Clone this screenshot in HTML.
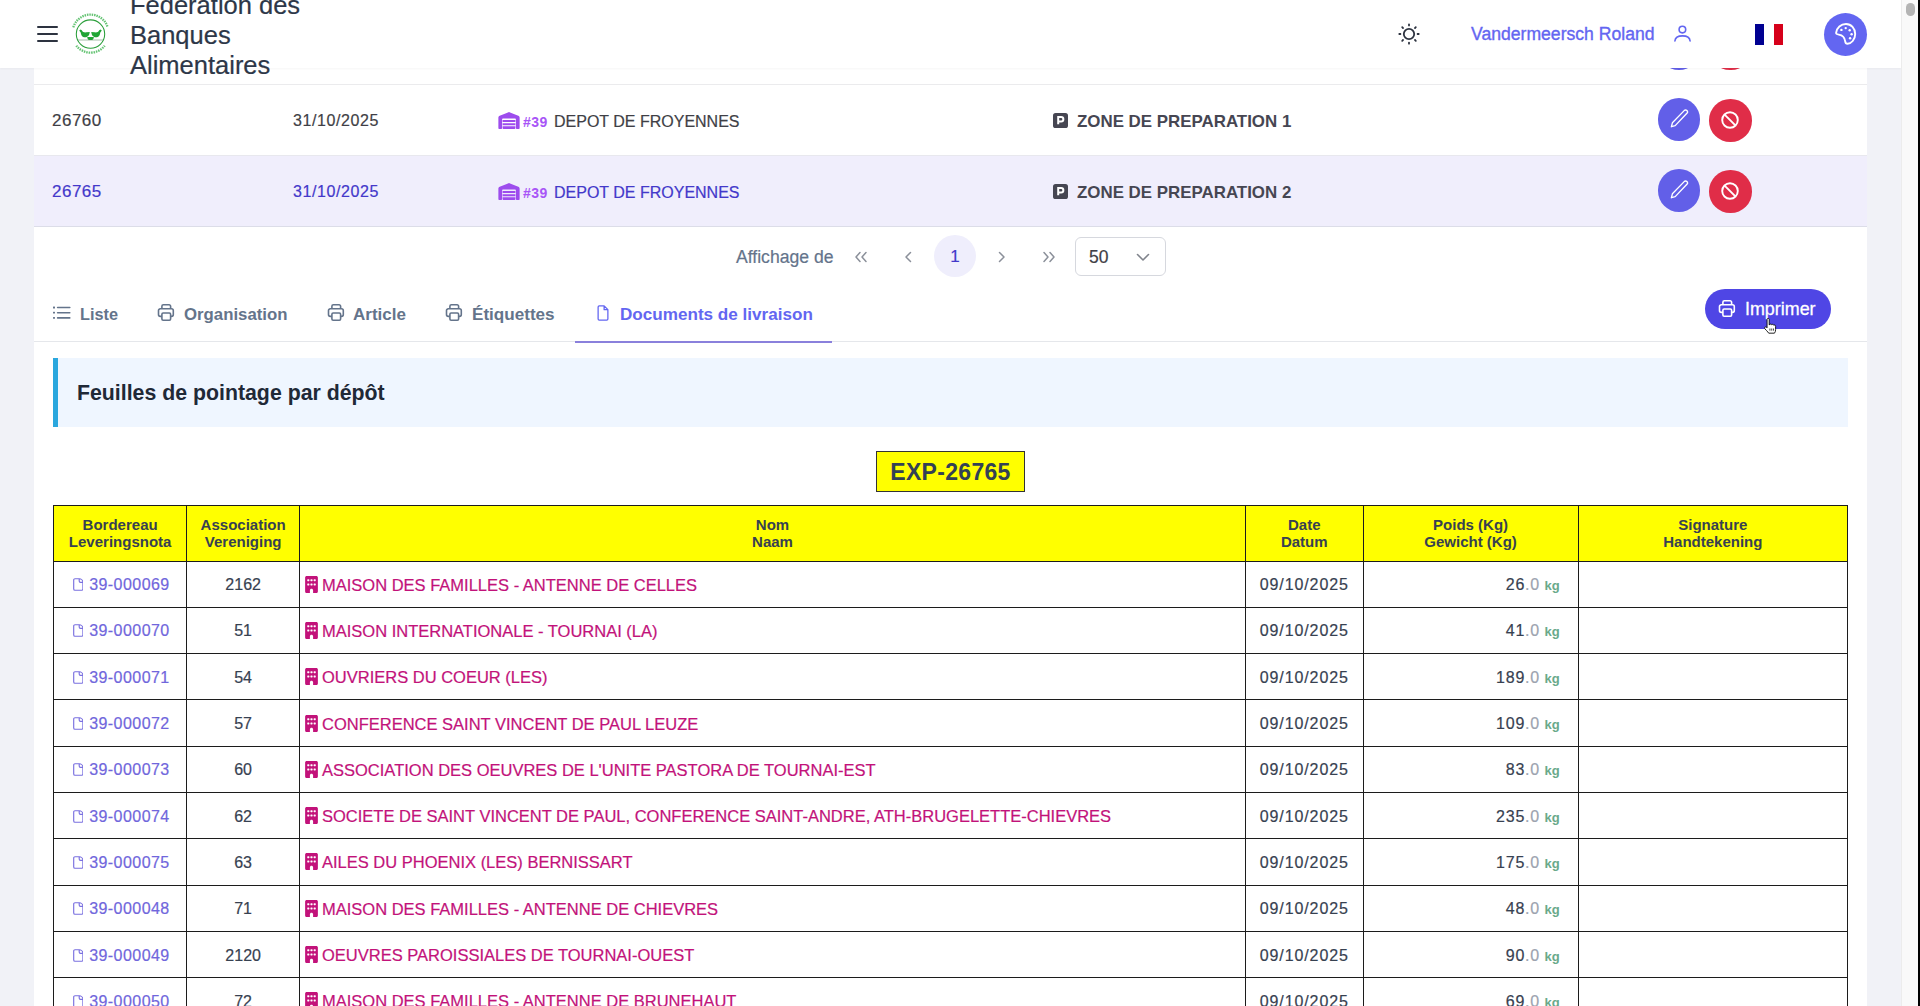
<!DOCTYPE html>
<html><head><meta charset="utf-8">
<style>
*{box-sizing:border-box;margin:0;padding:0}
html,body{width:1920px;height:1006px;overflow:hidden}
body{background:#f1f2f7;font-family:"Liberation Sans",sans-serif;position:relative;color:#334155}
.abs{position:absolute}
#card{position:absolute;left:34px;top:0;width:1833px;height:1006px;background:#fff}
#hdr{position:absolute;left:0;top:0;width:1901px;height:68px;background:#fff;z-index:5;box-shadow:0 1px 2px rgba(0,0,0,0.04)}
#sb{position:absolute;left:1901px;top:0;width:17px;height:1006px;background:#f9f9f9;border-left:1px solid #ececec;z-index:6}
#sbthumb{position:absolute;left:1906px;top:3px;width:9px;height:13px;border-radius:5px;background:#b4b4b4;z-index:7}
#blk{position:absolute;left:1918px;top:0;width:2px;height:1006px;background:#000;z-index:7}
.t{position:absolute;white-space:nowrap;-webkit-text-stroke:0.2px currentColor}
.t[style*="bold"]{-webkit-text-stroke:0}
#tb td .kg{-webkit-text-stroke:0}
.rowline{position:absolute;left:34px;width:1833px;height:1px;background:#ebebed}
.btn{position:absolute;width:42.5px;height:42.5px;border-radius:50%}
.btn svg{position:absolute;left:11.25px;top:11.25px}
</style></head><body>
<div id="card"></div>

<!-- top rows -->
<div class="btn" style="left:1657.5px;top:27px;background:#625fe8"></div>
<div class="btn" style="left:1709px;top:27.5px;background:#e02d48"></div>
<div class="rowline" style="top:84px"></div>
<div class="abs" style="left:34px;top:155px;width:1833px;height:71px;background:#f0eefc"></div>
<div class="rowline" style="top:155px;background:#e8e8ee"></div>
<div class="rowline" style="top:226px;background:#dcdde8"></div>



<!-- row 1 -->
<div class="t" style="left:52px;top:111px;font-size:17px;line-height:20px;letter-spacing:0.5px;color:#3f3f46">26760</div>
<div class="t" style="left:293px;top:111px;font-size:16px;line-height:20px;letter-spacing:0.6px;color:#3f3f46">31/10/2025</div>
<svg class="abs" style="left:498px;top:112px" width="22" height="17" viewBox="0 0 640 512"><path fill="#9d4ced" d="M0 488V171.3c0-26.2 15.9-49.7 40.2-59.4L308.1 4.8c7.6-3.1 16.1-3.1 23.8 0l267.9 107.1c24.3 9.7 40.2 33.3 40.2 59.4V488c0 13.3-10.7 24-24 24H552c-13.3 0-24-10.7-24-24V224c0-17.7-14.3-32-32-32H144c-17.7 0-32 14.3-32 32V488c0 13.3-10.7 24-24 24H24c-13.3 0-24-10.7-24-24zm488 24H152c-13.3 0-24-10.7-24-24V432H512v56c0 13.3-10.7 24-24 24zM128 400V336H512v64H128zm0-96V240H512v64H128z"/></svg>
<div class="t" style="left:523px;top:113px;font-size:14px;line-height:18px;letter-spacing:0.5px;font-weight:bold;color:#a855f7">#39</div>
<div class="t" style="left:554px;top:111.5px;font-size:16px;line-height:20px;color:#3f3f46">DEPOT DE FROYENNES</div>
<svg class="abs" style="left:1053px;top:113px" width="15" height="15" viewBox="0 0 15 15"><rect width="15" height="15" rx="2.6" fill="#464652"/><path d="M5.2 11.3V4h2.9a2.25 2.25 0 0 1 0 4.5H5.2" fill="none" stroke="#fff" stroke-width="2"/></svg>
<div class="t" style="left:1077px;top:111.5px;font-size:16.9px;line-height:20px;font-weight:bold;color:#464652">ZONE DE PREPARATION 1</div>
<div class="btn" style="left:1657.5px;top:98px;background:#625fe8"><svg width="20" height="20" viewBox="0 0 20 20" fill="none" stroke="#fff" stroke-width="1.35" stroke-linejoin="round"><path d="M15.2 1.6a1.9 1.9 0 0 1 2.7 2.7L6.2 16.6 2.4 17.7l1-3.9z"/></svg></div>
<div class="btn" style="left:1709px;top:99px;background:#e02d48"><svg width="20" height="20" viewBox="0 0 20 20" fill="none" stroke="#fff" stroke-width="1.9"><circle cx="10" cy="10" r="7.8"/><path d="M4.6 4.6l10.8 10.8"/></svg></div>
<!-- row 2 -->
<div class="t" style="left:52px;top:182px;font-size:17px;line-height:20px;letter-spacing:0.5px;color:#4338ca">26765</div>
<div class="t" style="left:293px;top:182px;font-size:16px;line-height:20px;letter-spacing:0.6px;color:#4338ca">31/10/2025</div>
<svg class="abs" style="left:498px;top:183px" width="22" height="17" viewBox="0 0 640 512"><path fill="#9d4ced" d="M0 488V171.3c0-26.2 15.9-49.7 40.2-59.4L308.1 4.8c7.6-3.1 16.1-3.1 23.8 0l267.9 107.1c24.3 9.7 40.2 33.3 40.2 59.4V488c0 13.3-10.7 24-24 24H552c-13.3 0-24-10.7-24-24V224c0-17.7-14.3-32-32-32H144c-17.7 0-32 14.3-32 32V488c0 13.3-10.7 24-24 24H24c-13.3 0-24-10.7-24-24zm488 24H152c-13.3 0-24-10.7-24-24V432H512v56c0 13.3-10.7 24-24 24zM128 400V336H512v64H128zm0-96V240H512v64H128z"/></svg>
<div class="t" style="left:523px;top:184px;font-size:14px;line-height:18px;letter-spacing:0.5px;font-weight:bold;color:#a855f7">#39</div>
<div class="t" style="left:554px;top:182.5px;font-size:16px;line-height:20px;color:#4338ca">DEPOT DE FROYENNES</div>
<svg class="abs" style="left:1053px;top:184px" width="15" height="15" viewBox="0 0 15 15"><rect width="15" height="15" rx="2.6" fill="#464652"/><path d="M5.2 11.3V4h2.9a2.25 2.25 0 0 1 0 4.5H5.2" fill="none" stroke="#fff" stroke-width="2"/></svg>
<div class="t" style="left:1077px;top:182.5px;font-size:16.9px;line-height:20px;font-weight:bold;color:#464652">ZONE DE PREPARATION 2</div>
<div class="btn" style="left:1657.5px;top:169px;background:#625fe8"><svg width="20" height="20" viewBox="0 0 20 20" fill="none" stroke="#fff" stroke-width="1.35" stroke-linejoin="round"><path d="M15.2 1.6a1.9 1.9 0 0 1 2.7 2.7L6.2 16.6 2.4 17.7l1-3.9z"/></svg></div>
<div class="btn" style="left:1709px;top:170px;background:#e02d48"><svg width="20" height="20" viewBox="0 0 20 20" fill="none" stroke="#fff" stroke-width="1.9"><circle cx="10" cy="10" r="7.8"/><path d="M4.6 4.6l10.8 10.8"/></svg></div>

<!-- pagination -->
<div class="t" style="left:736px;top:247px;font-size:17.6px;line-height:20px;color:#64748b">Affichage de</div>
<svg class="abs" style="left:852px;top:249px" width="18" height="16" viewBox="0 0 18 16" fill="none" stroke="#8b909a" stroke-width="1.5" stroke-linecap="round" stroke-linejoin="round"><path d="M8 3.5 4 8l4 4.5M14 3.5 10 8l4 4.5"/></svg>
<svg class="abs" style="left:900px;top:249px" width="16" height="16" viewBox="0 0 16 16" fill="none" stroke="#8b909a" stroke-width="1.5" stroke-linecap="round" stroke-linejoin="round"><path d="M10.5 3.5 6 8l4.5 4.5"/></svg>
<div class="abs" style="left:934px;top:235px;width:42px;height:42px;border-radius:50%;background:#efeefc"></div>
<div class="t" style="left:934px;top:247px;width:42px;text-align:center;font-size:17px;line-height:20px;color:#4338ca">1</div>
<svg class="abs" style="left:994px;top:249px" width="16" height="16" viewBox="0 0 16 16" fill="none" stroke="#8b909a" stroke-width="1.5" stroke-linecap="round" stroke-linejoin="round"><path d="M5.5 3.5 10 8l-4.5 4.5"/></svg>
<svg class="abs" style="left:1040px;top:249px" width="18" height="16" viewBox="0 0 18 16" fill="none" stroke="#8b909a" stroke-width="1.5" stroke-linecap="round" stroke-linejoin="round"><path d="M4 3.5 8 8l-4 4.5M10 3.5 14 8l-4 4.5"/></svg>
<div class="abs" style="left:1075px;top:237px;width:91px;height:39px;border:1px solid #d6d8de;border-radius:6px;background:#fff"></div>
<div class="t" style="left:1089px;top:247px;font-size:17.5px;line-height:20px;color:#3f3f46">50</div>
<svg class="abs" style="left:1134px;top:248px" width="18" height="18" viewBox="0 0 18 18" fill="none" stroke="#80848c" stroke-width="1.6" stroke-linecap="round" stroke-linejoin="round"><path d="M3.5 6.5 9 12l5.5-5.5"/></svg>

<!-- tabs -->
<div class="abs" style="left:34px;top:341px;width:1833px;height:1px;background:#e5e7eb"></div>
<div class="abs" style="left:575px;top:341px;width:257px;height:2px;background:#8a80dc"></div>
<svg class="abs" style="left:52px;top:305px" width="20" height="16" viewBox="0 0 20 16" fill="#64748b"><rect x="1" y="1.6" width="2" height="1.8" rx=".5"/><rect x="1" y="6.8" width="2" height="1.8" rx=".5"/><rect x="1" y="12" width="2" height="1.8" rx=".5"/><rect x="4.8" y="1.7" width="13.8" height="1.6" rx=".8"/><rect x="4.8" y="6.9" width="13.8" height="1.6" rx=".8"/><rect x="4.8" y="12.1" width="13.8" height="1.6" rx=".8"/></svg>
<div class="t" style="left:80px;top:304px;font-size:16.3px;line-height:20px;font-weight:bold;color:#64748b">Liste</div>
<svg class="abs" style="left:157px;top:303px" width="18" height="19" viewBox="0 0 18 19" fill="none" stroke="#64748b" stroke-width="1.6" stroke-linejoin="round"><path d="M4.9 5.8V3.3a1.5 1.5 0 0 1 1.5-1.5h5.7a1.5 1.5 0 0 1 1.5 1.5v2.5M4.9 13.4H3.3a1.8 1.8 0 0 1-1.8-1.8V7.6a1.8 1.8 0 0 1 1.8-1.8h11.2a1.8 1.8 0 0 1 1.8 1.8v4a1.8 1.8 0 0 1-1.8 1.8H13.6"/><rect x="4.9" y="10" width="8.7" height="7.3" rx="1.2"/></svg>
<div class="t" style="left:184px;top:304.5px;font-size:16.8px;line-height:20px;font-weight:bold;color:#64748b">Organisation</div>
<svg class="abs" style="left:326.5px;top:303px" width="18" height="19" viewBox="0 0 18 19" fill="none" stroke="#64748b" stroke-width="1.6" stroke-linejoin="round"><path d="M4.9 5.8V3.3a1.5 1.5 0 0 1 1.5-1.5h5.7a1.5 1.5 0 0 1 1.5 1.5v2.5M4.9 13.4H3.3a1.8 1.8 0 0 1-1.8-1.8V7.6a1.8 1.8 0 0 1 1.8-1.8h11.2a1.8 1.8 0 0 1 1.8 1.8v4a1.8 1.8 0 0 1-1.8 1.8H13.6"/><rect x="4.9" y="10" width="8.7" height="7.3" rx="1.2"/></svg>
<div class="t" style="left:353px;top:304.5px;font-size:17px;line-height:20px;font-weight:bold;color:#64748b">Article</div>
<svg class="abs" style="left:445px;top:303px" width="18" height="19" viewBox="0 0 18 19" fill="none" stroke="#64748b" stroke-width="1.6" stroke-linejoin="round"><path d="M4.9 5.8V3.3a1.5 1.5 0 0 1 1.5-1.5h5.7a1.5 1.5 0 0 1 1.5 1.5v2.5M4.9 13.4H3.3a1.8 1.8 0 0 1-1.8-1.8V7.6a1.8 1.8 0 0 1 1.8-1.8h11.2a1.8 1.8 0 0 1 1.8 1.8v4a1.8 1.8 0 0 1-1.8 1.8H13.6"/><rect x="4.9" y="10" width="8.7" height="7.3" rx="1.2"/></svg>
<div class="t" style="left:472px;top:304.5px;font-size:17.1px;line-height:20px;font-weight:bold;color:#64748b">Étiquettes</div>
<svg class="abs" style="left:594px;top:304px" width="18" height="18" viewBox="0 0 24 24" fill="none" stroke="#6366f1" stroke-width="1.7" stroke-linejoin="round"><path d="M13.5 2.5H7A1.5 1.5 0 0 0 5.5 4v16A1.5 1.5 0 0 0 7 21.5h10a1.5 1.5 0 0 0 1.5-1.5V7.5l-5-5zM13.5 2.5v5h5"/></svg>
<div class="t" style="left:620px;top:304.5px;font-size:17.1px;line-height:20px;font-weight:bold;color:#6366f1">Documents de livraison</div>

<!-- imprimer -->
<div class="abs" style="left:1705px;top:289px;width:126px;height:40px;border-radius:20px;background:#4f46e5"></div>
<svg class="abs" style="left:1718px;top:299px" width="18" height="19" viewBox="0 0 18 19" fill="none" stroke="#fff" stroke-width="1.6" stroke-linejoin="round"><path d="M4.9 5.8V3.3a1.5 1.5 0 0 1 1.5-1.5h5.7a1.5 1.5 0 0 1 1.5 1.5v2.5M4.9 13.4H3.3a1.8 1.8 0 0 1-1.8-1.8V7.6a1.8 1.8 0 0 1 1.8-1.8h11.2a1.8 1.8 0 0 1 1.8 1.8v4a1.8 1.8 0 0 1-1.8 1.8H13.6"/><rect x="4.9" y="10" width="8.7" height="7.3" rx="1.2"/></svg>
<div class="t" style="left:1745px;top:299px;font-size:17.9px;line-height:20px;color:#fff;-webkit-text-stroke:0.3px #fff">Imprimer</div>
<svg class="abs" style="left:1762px;top:316.5px;z-index:4" width="17.3" height="18.7" viewBox="0 0 24 26"><path d="M7 3.5c0-1 .7-1.6 1.5-1.6S10 2.5 10 3.5V11l.5-.2c.3-1 1.2-1.3 2-1 .5.2.8.6.9 1 .5-.6 1.4-.8 2.1-.4.4.2.6.6.7 1 .6-.4 1.4-.4 2 0 .5.4.7 1 .7 1.7v4.4c0 2.3-.6 3.6-1.6 5H9.3c-.6-1-1.7-2.2-2.8-3.4L4 16.5c-.7-.9-.6-2 .2-2.5.7-.5 1.6-.4 2.3.3L7 15z" fill="#fff" stroke="#000" stroke-width="1.2" stroke-linejoin="round"/><path d="M11 16v3M13.5 16v3M16 16v3" stroke="#000" stroke-width="1"/></svg>

<!-- info box -->
<div class="abs" style="left:53px;top:358px;width:1795px;height:69px;background:#eff6ff;border-left:5px solid #2aa7de"></div>
<div class="t" style="left:77px;top:381px;font-size:21.3px;line-height:24px;font-weight:bold;color:#1f2937">Feuilles de pointage par dépôt</div>

<!-- EXP box -->
<div class="abs" style="left:876px;top:451px;width:149px;height:41px;background:#ffff00;border:1.5px solid #333"></div>
<div class="t" style="left:876px;top:460px;width:149px;text-align:center;font-size:23px;line-height:24px;letter-spacing:0.3px;font-weight:bold;color:#334155">EXP-26765</div>


<style>
#tb{position:absolute;left:53px;top:505px;border-collapse:collapse;table-layout:fixed;width:1794px;font-size:16px}
#tb td,#tb th{border:1px solid #1c1c1c;padding:0}
#tb th{background:#ffff00;font-weight:bold;font-size:15px;line-height:17.5px;color:#374151;height:55.5px;text-align:center}
#tb td{-webkit-text-stroke:0.2px currentColor;height:46.3px;padding-top:2px !important;background:#fff;color:#374151;text-align:center;white-space:nowrap;overflow:hidden}
#tb td.c1{color:#7066dc;padding-left:2px !important}
#tb td.c1 .di{vertical-align:-1px;margin-right:6px}
#tb td.c1 .bn{letter-spacing:0.45px}
#tb td.c3{text-align:left;padding-left:5px;color:#c2127a}
#tb td.c3 .bi{vertical-align:-2px;margin-right:4px}
#tb td.c3 .nm{font-size:16.5px}
#tb td.c4{letter-spacing:0.9px}
#tb td.c5{text-align:right;padding-right:18px}
#tb .wi{letter-spacing:0.8px}
#tb .wd{color:#9ca3af;letter-spacing:0.8px}
#tb .kg{color:#6aa98a;font-weight:bold;font-size:13px}
</style>
<table id="tb"><colgroup><col style="width:133.25px"><col style="width:112.75px"><col style="width:946px"><col style="width:117.5px"><col style="width:215.2px"><col style="width:269.3px"></colgroup>
<tr><th>Bordereau<br>Leveringsnota</th><th>Association<br>Vereniging</th><th>Nom<br>Naam</th><th>Date<br>Datum</th><th>Poids (Kg)<br>Gewicht (Kg)</th><th>Signature<br>Handtekening</th></tr>
<tr><td class="c1"><svg class="di" width="10.6" height="13" viewBox="0 0 10.6 13" fill="none" stroke="#7a70e0" stroke-width="1.15" stroke-linejoin="round"><path d="M6.2.7H2A1.3 1.3 0 0 0 .7 2v9A1.3 1.3 0 0 0 2 12.3h6.6A1.3 1.3 0 0 0 9.9 11V4.4A3.7 3.7 0 0 0 6.2.7zM6.2.7v2.4a1.3 1.3 0 0 0 1.3 1.3h2.4"/></svg><span class="bn">39-000069</span></td><td class="c2">2162</td><td class="c3"><svg class="bi" width="13" height="17" viewBox="0 0 384 512"><path fill="#c2127a" d="M48 0C21.5 0 0 21.5 0 48V464c0 26.5 21.5 48 48 48h96V432c0-26.5 21.5-48 48-48s48 21.5 48 48v80h96c26.5 0 48-21.5 48-48V48c0-26.5-21.5-48-48-48H48zM64 240c0-8.8 7.2-16 16-16h32c8.8 0 16 7.2 16 16v32c0 8.8-7.2 16-16 16H80c-8.8 0-16-7.2-16-16V240zm112-16h32c8.8 0 16 7.2 16 16v32c0 8.8-7.2 16-16 16H176c-8.8 0-16-7.2-16-16V240c0-8.8 7.2-16 16-16zm80 16c0-8.8 7.2-16 16-16h32c8.8 0 16 7.2 16 16v32c0 8.8-7.2 16-16 16H272c-8.8 0-16-7.2-16-16V240zM80 96h32c8.8 0 16 7.2 16 16v32c0 8.8-7.2 16-16 16H80c-8.8 0-16-7.2-16-16V112c0-8.8 7.2-16 16-16zm80 16c0-8.8 7.2-16 16-16h32c8.8 0 16 7.2 16 16v32c0 8.8-7.2 16-16 16H176c-8.8 0-16-7.2-16-16V112zM272 96h32c8.8 0 16 7.2 16 16v32c0 8.8-7.2 16-16 16H272c-8.8 0-16-7.2-16-16V112c0-8.8 7.2-16 16-16z"/></svg><span class="nm">MAISON DES FAMILLES - ANTENNE DE CELLES</span></td><td class="c4">09/10/2025</td><td class="c5"><span class="wi">26</span><span class="wd">.0</span> <span class="kg">kg</span></td><td></td></tr>
<tr><td class="c1"><svg class="di" width="10.6" height="13" viewBox="0 0 10.6 13" fill="none" stroke="#7a70e0" stroke-width="1.15" stroke-linejoin="round"><path d="M6.2.7H2A1.3 1.3 0 0 0 .7 2v9A1.3 1.3 0 0 0 2 12.3h6.6A1.3 1.3 0 0 0 9.9 11V4.4A3.7 3.7 0 0 0 6.2.7zM6.2.7v2.4a1.3 1.3 0 0 0 1.3 1.3h2.4"/></svg><span class="bn">39-000070</span></td><td class="c2">51</td><td class="c3"><svg class="bi" width="13" height="17" viewBox="0 0 384 512"><path fill="#c2127a" d="M48 0C21.5 0 0 21.5 0 48V464c0 26.5 21.5 48 48 48h96V432c0-26.5 21.5-48 48-48s48 21.5 48 48v80h96c26.5 0 48-21.5 48-48V48c0-26.5-21.5-48-48-48H48zM64 240c0-8.8 7.2-16 16-16h32c8.8 0 16 7.2 16 16v32c0 8.8-7.2 16-16 16H80c-8.8 0-16-7.2-16-16V240zm112-16h32c8.8 0 16 7.2 16 16v32c0 8.8-7.2 16-16 16H176c-8.8 0-16-7.2-16-16V240c0-8.8 7.2-16 16-16zm80 16c0-8.8 7.2-16 16-16h32c8.8 0 16 7.2 16 16v32c0 8.8-7.2 16-16 16H272c-8.8 0-16-7.2-16-16V240zM80 96h32c8.8 0 16 7.2 16 16v32c0 8.8-7.2 16-16 16H80c-8.8 0-16-7.2-16-16V112c0-8.8 7.2-16 16-16zm80 16c0-8.8 7.2-16 16-16h32c8.8 0 16 7.2 16 16v32c0 8.8-7.2 16-16 16H176c-8.8 0-16-7.2-16-16V112zM272 96h32c8.8 0 16 7.2 16 16v32c0 8.8-7.2 16-16 16H272c-8.8 0-16-7.2-16-16V112c0-8.8 7.2-16 16-16z"/></svg><span class="nm">MAISON INTERNATIONALE - TOURNAI (LA)</span></td><td class="c4">09/10/2025</td><td class="c5"><span class="wi">41</span><span class="wd">.0</span> <span class="kg">kg</span></td><td></td></tr>
<tr><td class="c1"><svg class="di" width="10.6" height="13" viewBox="0 0 10.6 13" fill="none" stroke="#7a70e0" stroke-width="1.15" stroke-linejoin="round"><path d="M6.2.7H2A1.3 1.3 0 0 0 .7 2v9A1.3 1.3 0 0 0 2 12.3h6.6A1.3 1.3 0 0 0 9.9 11V4.4A3.7 3.7 0 0 0 6.2.7zM6.2.7v2.4a1.3 1.3 0 0 0 1.3 1.3h2.4"/></svg><span class="bn">39-000071</span></td><td class="c2">54</td><td class="c3"><svg class="bi" width="13" height="17" viewBox="0 0 384 512"><path fill="#c2127a" d="M48 0C21.5 0 0 21.5 0 48V464c0 26.5 21.5 48 48 48h96V432c0-26.5 21.5-48 48-48s48 21.5 48 48v80h96c26.5 0 48-21.5 48-48V48c0-26.5-21.5-48-48-48H48zM64 240c0-8.8 7.2-16 16-16h32c8.8 0 16 7.2 16 16v32c0 8.8-7.2 16-16 16H80c-8.8 0-16-7.2-16-16V240zm112-16h32c8.8 0 16 7.2 16 16v32c0 8.8-7.2 16-16 16H176c-8.8 0-16-7.2-16-16V240c0-8.8 7.2-16 16-16zm80 16c0-8.8 7.2-16 16-16h32c8.8 0 16 7.2 16 16v32c0 8.8-7.2 16-16 16H272c-8.8 0-16-7.2-16-16V240zM80 96h32c8.8 0 16 7.2 16 16v32c0 8.8-7.2 16-16 16H80c-8.8 0-16-7.2-16-16V112c0-8.8 7.2-16 16-16zm80 16c0-8.8 7.2-16 16-16h32c8.8 0 16 7.2 16 16v32c0 8.8-7.2 16-16 16H176c-8.8 0-16-7.2-16-16V112zM272 96h32c8.8 0 16 7.2 16 16v32c0 8.8-7.2 16-16 16H272c-8.8 0-16-7.2-16-16V112c0-8.8 7.2-16 16-16z"/></svg><span class="nm">OUVRIERS DU COEUR (LES)</span></td><td class="c4">09/10/2025</td><td class="c5"><span class="wi">189</span><span class="wd">.0</span> <span class="kg">kg</span></td><td></td></tr>
<tr><td class="c1"><svg class="di" width="10.6" height="13" viewBox="0 0 10.6 13" fill="none" stroke="#7a70e0" stroke-width="1.15" stroke-linejoin="round"><path d="M6.2.7H2A1.3 1.3 0 0 0 .7 2v9A1.3 1.3 0 0 0 2 12.3h6.6A1.3 1.3 0 0 0 9.9 11V4.4A3.7 3.7 0 0 0 6.2.7zM6.2.7v2.4a1.3 1.3 0 0 0 1.3 1.3h2.4"/></svg><span class="bn">39-000072</span></td><td class="c2">57</td><td class="c3"><svg class="bi" width="13" height="17" viewBox="0 0 384 512"><path fill="#c2127a" d="M48 0C21.5 0 0 21.5 0 48V464c0 26.5 21.5 48 48 48h96V432c0-26.5 21.5-48 48-48s48 21.5 48 48v80h96c26.5 0 48-21.5 48-48V48c0-26.5-21.5-48-48-48H48zM64 240c0-8.8 7.2-16 16-16h32c8.8 0 16 7.2 16 16v32c0 8.8-7.2 16-16 16H80c-8.8 0-16-7.2-16-16V240zm112-16h32c8.8 0 16 7.2 16 16v32c0 8.8-7.2 16-16 16H176c-8.8 0-16-7.2-16-16V240c0-8.8 7.2-16 16-16zm80 16c0-8.8 7.2-16 16-16h32c8.8 0 16 7.2 16 16v32c0 8.8-7.2 16-16 16H272c-8.8 0-16-7.2-16-16V240zM80 96h32c8.8 0 16 7.2 16 16v32c0 8.8-7.2 16-16 16H80c-8.8 0-16-7.2-16-16V112c0-8.8 7.2-16 16-16zm80 16c0-8.8 7.2-16 16-16h32c8.8 0 16 7.2 16 16v32c0 8.8-7.2 16-16 16H176c-8.8 0-16-7.2-16-16V112zM272 96h32c8.8 0 16 7.2 16 16v32c0 8.8-7.2 16-16 16H272c-8.8 0-16-7.2-16-16V112c0-8.8 7.2-16 16-16z"/></svg><span class="nm">CONFERENCE SAINT VINCENT DE PAUL LEUZE</span></td><td class="c4">09/10/2025</td><td class="c5"><span class="wi">109</span><span class="wd">.0</span> <span class="kg">kg</span></td><td></td></tr>
<tr><td class="c1"><svg class="di" width="10.6" height="13" viewBox="0 0 10.6 13" fill="none" stroke="#7a70e0" stroke-width="1.15" stroke-linejoin="round"><path d="M6.2.7H2A1.3 1.3 0 0 0 .7 2v9A1.3 1.3 0 0 0 2 12.3h6.6A1.3 1.3 0 0 0 9.9 11V4.4A3.7 3.7 0 0 0 6.2.7zM6.2.7v2.4a1.3 1.3 0 0 0 1.3 1.3h2.4"/></svg><span class="bn">39-000073</span></td><td class="c2">60</td><td class="c3"><svg class="bi" width="13" height="17" viewBox="0 0 384 512"><path fill="#c2127a" d="M48 0C21.5 0 0 21.5 0 48V464c0 26.5 21.5 48 48 48h96V432c0-26.5 21.5-48 48-48s48 21.5 48 48v80h96c26.5 0 48-21.5 48-48V48c0-26.5-21.5-48-48-48H48zM64 240c0-8.8 7.2-16 16-16h32c8.8 0 16 7.2 16 16v32c0 8.8-7.2 16-16 16H80c-8.8 0-16-7.2-16-16V240zm112-16h32c8.8 0 16 7.2 16 16v32c0 8.8-7.2 16-16 16H176c-8.8 0-16-7.2-16-16V240c0-8.8 7.2-16 16-16zm80 16c0-8.8 7.2-16 16-16h32c8.8 0 16 7.2 16 16v32c0 8.8-7.2 16-16 16H272c-8.8 0-16-7.2-16-16V240zM80 96h32c8.8 0 16 7.2 16 16v32c0 8.8-7.2 16-16 16H80c-8.8 0-16-7.2-16-16V112c0-8.8 7.2-16 16-16zm80 16c0-8.8 7.2-16 16-16h32c8.8 0 16 7.2 16 16v32c0 8.8-7.2 16-16 16H176c-8.8 0-16-7.2-16-16V112zM272 96h32c8.8 0 16 7.2 16 16v32c0 8.8-7.2 16-16 16H272c-8.8 0-16-7.2-16-16V112c0-8.8 7.2-16 16-16z"/></svg><span class="nm">ASSOCIATION DES OEUVRES DE L'UNITE PASTORA DE TOURNAI-EST</span></td><td class="c4">09/10/2025</td><td class="c5"><span class="wi">83</span><span class="wd">.0</span> <span class="kg">kg</span></td><td></td></tr>
<tr><td class="c1"><svg class="di" width="10.6" height="13" viewBox="0 0 10.6 13" fill="none" stroke="#7a70e0" stroke-width="1.15" stroke-linejoin="round"><path d="M6.2.7H2A1.3 1.3 0 0 0 .7 2v9A1.3 1.3 0 0 0 2 12.3h6.6A1.3 1.3 0 0 0 9.9 11V4.4A3.7 3.7 0 0 0 6.2.7zM6.2.7v2.4a1.3 1.3 0 0 0 1.3 1.3h2.4"/></svg><span class="bn">39-000074</span></td><td class="c2">62</td><td class="c3"><svg class="bi" width="13" height="17" viewBox="0 0 384 512"><path fill="#c2127a" d="M48 0C21.5 0 0 21.5 0 48V464c0 26.5 21.5 48 48 48h96V432c0-26.5 21.5-48 48-48s48 21.5 48 48v80h96c26.5 0 48-21.5 48-48V48c0-26.5-21.5-48-48-48H48zM64 240c0-8.8 7.2-16 16-16h32c8.8 0 16 7.2 16 16v32c0 8.8-7.2 16-16 16H80c-8.8 0-16-7.2-16-16V240zm112-16h32c8.8 0 16 7.2 16 16v32c0 8.8-7.2 16-16 16H176c-8.8 0-16-7.2-16-16V240c0-8.8 7.2-16 16-16zm80 16c0-8.8 7.2-16 16-16h32c8.8 0 16 7.2 16 16v32c0 8.8-7.2 16-16 16H272c-8.8 0-16-7.2-16-16V240zM80 96h32c8.8 0 16 7.2 16 16v32c0 8.8-7.2 16-16 16H80c-8.8 0-16-7.2-16-16V112c0-8.8 7.2-16 16-16zm80 16c0-8.8 7.2-16 16-16h32c8.8 0 16 7.2 16 16v32c0 8.8-7.2 16-16 16H176c-8.8 0-16-7.2-16-16V112zM272 96h32c8.8 0 16 7.2 16 16v32c0 8.8-7.2 16-16 16H272c-8.8 0-16-7.2-16-16V112c0-8.8 7.2-16 16-16z"/></svg><span class="nm">SOCIETE DE SAINT VINCENT DE PAUL, CONFERENCE SAINT-ANDRE, ATH-BRUGELETTE-CHIEVRES</span></td><td class="c4">09/10/2025</td><td class="c5"><span class="wi">235</span><span class="wd">.0</span> <span class="kg">kg</span></td><td></td></tr>
<tr><td class="c1"><svg class="di" width="10.6" height="13" viewBox="0 0 10.6 13" fill="none" stroke="#7a70e0" stroke-width="1.15" stroke-linejoin="round"><path d="M6.2.7H2A1.3 1.3 0 0 0 .7 2v9A1.3 1.3 0 0 0 2 12.3h6.6A1.3 1.3 0 0 0 9.9 11V4.4A3.7 3.7 0 0 0 6.2.7zM6.2.7v2.4a1.3 1.3 0 0 0 1.3 1.3h2.4"/></svg><span class="bn">39-000075</span></td><td class="c2">63</td><td class="c3"><svg class="bi" width="13" height="17" viewBox="0 0 384 512"><path fill="#c2127a" d="M48 0C21.5 0 0 21.5 0 48V464c0 26.5 21.5 48 48 48h96V432c0-26.5 21.5-48 48-48s48 21.5 48 48v80h96c26.5 0 48-21.5 48-48V48c0-26.5-21.5-48-48-48H48zM64 240c0-8.8 7.2-16 16-16h32c8.8 0 16 7.2 16 16v32c0 8.8-7.2 16-16 16H80c-8.8 0-16-7.2-16-16V240zm112-16h32c8.8 0 16 7.2 16 16v32c0 8.8-7.2 16-16 16H176c-8.8 0-16-7.2-16-16V240c0-8.8 7.2-16 16-16zm80 16c0-8.8 7.2-16 16-16h32c8.8 0 16 7.2 16 16v32c0 8.8-7.2 16-16 16H272c-8.8 0-16-7.2-16-16V240zM80 96h32c8.8 0 16 7.2 16 16v32c0 8.8-7.2 16-16 16H80c-8.8 0-16-7.2-16-16V112c0-8.8 7.2-16 16-16zm80 16c0-8.8 7.2-16 16-16h32c8.8 0 16 7.2 16 16v32c0 8.8-7.2 16-16 16H176c-8.8 0-16-7.2-16-16V112zM272 96h32c8.8 0 16 7.2 16 16v32c0 8.8-7.2 16-16 16H272c-8.8 0-16-7.2-16-16V112c0-8.8 7.2-16 16-16z"/></svg><span class="nm">AILES DU PHOENIX (LES) BERNISSART</span></td><td class="c4">09/10/2025</td><td class="c5"><span class="wi">175</span><span class="wd">.0</span> <span class="kg">kg</span></td><td></td></tr>
<tr><td class="c1"><svg class="di" width="10.6" height="13" viewBox="0 0 10.6 13" fill="none" stroke="#7a70e0" stroke-width="1.15" stroke-linejoin="round"><path d="M6.2.7H2A1.3 1.3 0 0 0 .7 2v9A1.3 1.3 0 0 0 2 12.3h6.6A1.3 1.3 0 0 0 9.9 11V4.4A3.7 3.7 0 0 0 6.2.7zM6.2.7v2.4a1.3 1.3 0 0 0 1.3 1.3h2.4"/></svg><span class="bn">39-000048</span></td><td class="c2">71</td><td class="c3"><svg class="bi" width="13" height="17" viewBox="0 0 384 512"><path fill="#c2127a" d="M48 0C21.5 0 0 21.5 0 48V464c0 26.5 21.5 48 48 48h96V432c0-26.5 21.5-48 48-48s48 21.5 48 48v80h96c26.5 0 48-21.5 48-48V48c0-26.5-21.5-48-48-48H48zM64 240c0-8.8 7.2-16 16-16h32c8.8 0 16 7.2 16 16v32c0 8.8-7.2 16-16 16H80c-8.8 0-16-7.2-16-16V240zm112-16h32c8.8 0 16 7.2 16 16v32c0 8.8-7.2 16-16 16H176c-8.8 0-16-7.2-16-16V240c0-8.8 7.2-16 16-16zm80 16c0-8.8 7.2-16 16-16h32c8.8 0 16 7.2 16 16v32c0 8.8-7.2 16-16 16H272c-8.8 0-16-7.2-16-16V240zM80 96h32c8.8 0 16 7.2 16 16v32c0 8.8-7.2 16-16 16H80c-8.8 0-16-7.2-16-16V112c0-8.8 7.2-16 16-16zm80 16c0-8.8 7.2-16 16-16h32c8.8 0 16 7.2 16 16v32c0 8.8-7.2 16-16 16H176c-8.8 0-16-7.2-16-16V112zM272 96h32c8.8 0 16 7.2 16 16v32c0 8.8-7.2 16-16 16H272c-8.8 0-16-7.2-16-16V112c0-8.8 7.2-16 16-16z"/></svg><span class="nm">MAISON DES FAMILLES - ANTENNE DE CHIEVRES</span></td><td class="c4">09/10/2025</td><td class="c5"><span class="wi">48</span><span class="wd">.0</span> <span class="kg">kg</span></td><td></td></tr>
<tr><td class="c1"><svg class="di" width="10.6" height="13" viewBox="0 0 10.6 13" fill="none" stroke="#7a70e0" stroke-width="1.15" stroke-linejoin="round"><path d="M6.2.7H2A1.3 1.3 0 0 0 .7 2v9A1.3 1.3 0 0 0 2 12.3h6.6A1.3 1.3 0 0 0 9.9 11V4.4A3.7 3.7 0 0 0 6.2.7zM6.2.7v2.4a1.3 1.3 0 0 0 1.3 1.3h2.4"/></svg><span class="bn">39-000049</span></td><td class="c2">2120</td><td class="c3"><svg class="bi" width="13" height="17" viewBox="0 0 384 512"><path fill="#c2127a" d="M48 0C21.5 0 0 21.5 0 48V464c0 26.5 21.5 48 48 48h96V432c0-26.5 21.5-48 48-48s48 21.5 48 48v80h96c26.5 0 48-21.5 48-48V48c0-26.5-21.5-48-48-48H48zM64 240c0-8.8 7.2-16 16-16h32c8.8 0 16 7.2 16 16v32c0 8.8-7.2 16-16 16H80c-8.8 0-16-7.2-16-16V240zm112-16h32c8.8 0 16 7.2 16 16v32c0 8.8-7.2 16-16 16H176c-8.8 0-16-7.2-16-16V240c0-8.8 7.2-16 16-16zm80 16c0-8.8 7.2-16 16-16h32c8.8 0 16 7.2 16 16v32c0 8.8-7.2 16-16 16H272c-8.8 0-16-7.2-16-16V240zM80 96h32c8.8 0 16 7.2 16 16v32c0 8.8-7.2 16-16 16H80c-8.8 0-16-7.2-16-16V112c0-8.8 7.2-16 16-16zm80 16c0-8.8 7.2-16 16-16h32c8.8 0 16 7.2 16 16v32c0 8.8-7.2 16-16 16H176c-8.8 0-16-7.2-16-16V112zM272 96h32c8.8 0 16 7.2 16 16v32c0 8.8-7.2 16-16 16H272c-8.8 0-16-7.2-16-16V112c0-8.8 7.2-16 16-16z"/></svg><span class="nm">OEUVRES PAROISSIALES DE TOURNAI-OUEST</span></td><td class="c4">09/10/2025</td><td class="c5"><span class="wi">90</span><span class="wd">.0</span> <span class="kg">kg</span></td><td></td></tr>
<tr><td class="c1"><svg class="di" width="10.6" height="13" viewBox="0 0 10.6 13" fill="none" stroke="#7a70e0" stroke-width="1.15" stroke-linejoin="round"><path d="M6.2.7H2A1.3 1.3 0 0 0 .7 2v9A1.3 1.3 0 0 0 2 12.3h6.6A1.3 1.3 0 0 0 9.9 11V4.4A3.7 3.7 0 0 0 6.2.7zM6.2.7v2.4a1.3 1.3 0 0 0 1.3 1.3h2.4"/></svg><span class="bn">39-000050</span></td><td class="c2">72</td><td class="c3"><svg class="bi" width="13" height="17" viewBox="0 0 384 512"><path fill="#c2127a" d="M48 0C21.5 0 0 21.5 0 48V464c0 26.5 21.5 48 48 48h96V432c0-26.5 21.5-48 48-48s48 21.5 48 48v80h96c26.5 0 48-21.5 48-48V48c0-26.5-21.5-48-48-48H48zM64 240c0-8.8 7.2-16 16-16h32c8.8 0 16 7.2 16 16v32c0 8.8-7.2 16-16 16H80c-8.8 0-16-7.2-16-16V240zm112-16h32c8.8 0 16 7.2 16 16v32c0 8.8-7.2 16-16 16H176c-8.8 0-16-7.2-16-16V240c0-8.8 7.2-16 16-16zm80 16c0-8.8 7.2-16 16-16h32c8.8 0 16 7.2 16 16v32c0 8.8-7.2 16-16 16H272c-8.8 0-16-7.2-16-16V240zM80 96h32c8.8 0 16 7.2 16 16v32c0 8.8-7.2 16-16 16H80c-8.8 0-16-7.2-16-16V112c0-8.8 7.2-16 16-16zm80 16c0-8.8 7.2-16 16-16h32c8.8 0 16 7.2 16 16v32c0 8.8-7.2 16-16 16H176c-8.8 0-16-7.2-16-16V112zM272 96h32c8.8 0 16 7.2 16 16v32c0 8.8-7.2 16-16 16H272c-8.8 0-16-7.2-16-16V112c0-8.8 7.2-16 16-16z"/></svg><span class="nm">MAISON DES FAMILLES - ANTENNE DE BRUNEHAUT</span></td><td class="c4">09/10/2025</td><td class="c5"><span class="wi">69</span><span class="wd">.0</span> <span class="kg">kg</span></td><td></td></tr>
</table>

<div id="hdr">
  <!-- hamburger -->
  <div class="abs" style="left:37px;top:26px;width:21px;height:2px;background:#2d3340;border-radius:1px"></div>
  <div class="abs" style="left:37px;top:33px;width:21px;height:2px;background:#2d3340;border-radius:1px"></div>
  <div class="abs" style="left:37px;top:40px;width:21px;height:2px;background:#2d3340;border-radius:1px"></div>
  <!-- logo -->
  <svg class="abs" style="left:68px;top:12px" width="44" height="44" viewBox="68 12 44 44">
    <circle cx="90.5" cy="34.1" r="14.2" fill="none" stroke="#2a9e3a" stroke-width="1.05"/>
    <path d="M73.3 27.3A18 18 0 0 1 107.7 27.3" fill="none" stroke="#49b85a" stroke-width="2.3" stroke-dasharray="1.5 0.9" opacity=".85"/>
    <path d="M76.3 45.7A18 18 0 0 0 104.7 45.7" fill="none" stroke="#49b85a" stroke-width="2.3" stroke-dasharray="1.5 0.9" opacity=".85"/>
    <path d="M78 40H103" stroke="#9cb8a0" stroke-width="0.9"/>
    <path d="M79.2 30.6L80.6 29.4L81.8 30.2C82.5 32.2 84.5 32.6 86.5 32.3L89.8 32L89.2 34.5C88.4 36.8 86 37.6 84 37.2C82.1 36.8 81 35 80.7 32.5Z" fill="#20a535"/>
    <path d="M101.8 30.6L100.4 29.4L99.2 30.2C98.5 32.2 96.5 32.6 94.5 32.3L91.2 32L91.8 34.5C92.6 36.8 95 37.6 97 37.2C98.9 36.8 100 35 100.3 32.5Z" fill="#20a535"/>
    <path d="M87.2 37h6.7l-.5 2c-.3.6-.9.9-1.5.9h-2.7c-.6 0-1.2-.3-1.5-.9z" fill="#20a535"/>
  </svg>
  <div class="t" style="left:130px;top:-10px;font-size:25.5px;line-height:30px;color:#2d3748">Fédération des<br>Banques<br>Alimentaires</div>
  <!-- sun -->
  <svg class="abs" style="left:1397px;top:22px" width="24" height="24" viewBox="0 0 24 24" fill="none" stroke="#2d3340" stroke-width="1.8" stroke-linecap="round">
    <circle cx="12" cy="12" r="5.2"/>
    <path d="M12 2.3v1.1M12 20.6v1.1M2.3 12h1.1M20.6 12h1.1M5.2 5.2l.8.8M18 18l.8.8M5.2 18.8l.8-.8M18 6l.8-.8"/>
  </svg>
  <div class="t" style="left:1471px;top:24px;font-size:17.6px;line-height:20px;color:#6366f1;-webkit-text-stroke:0.35px #6366f1">Vandermeersch Roland</div>
  <svg class="abs" style="left:1672px;top:24px" width="20" height="20" viewBox="1672 24 20 20" fill="none" stroke="#6366f1" stroke-width="1.6" stroke-linecap="round"><circle cx="1682.4" cy="29.6" r="3.3"/><path d="M1674.9 41C1675.2 37.6 1678.3 35.9 1682.5 35.9C1686.7 35.9 1689.8 37.6 1690.1 41"/></svg>
  <!-- flag -->
  <div class="abs" style="left:1755px;top:24px;width:9px;height:21px;background:#000091"></div>
  <div class="abs" style="left:1764px;top:24px;width:10px;height:21px;background:#fff"></div>
  <div class="abs" style="left:1774px;top:24px;width:9px;height:21px;background:#d6001a"></div>
  <!-- palette button -->
  <div class="abs" style="left:1824px;top:13px;width:43px;height:43px;border-radius:50%;background:#6366f1"></div>
  <svg class="abs" style="left:1824px;top:13px" width="43" height="43" viewBox="1824 13 43 43" fill="none" stroke="#fff" stroke-width="1.9" stroke-linecap="round" stroke-linejoin="round">
    <path d="M1836.1 32.9C1836.7 27.7 1840.9 24 1846 24C1851.2 24 1855.2 28.4 1855.2 34C1855.2 39.6 1851.2 43.8 1847.5 43.8C1846.1 43.8 1845.4 42.9 1845.2 41.4C1844.8 37.9 1842.2 35.1 1838.8 34.6C1837.3 34.4 1836 34.1 1836.1 32.9Z"/>
    <g fill="#fff" stroke="none"><circle cx="1841.4" cy="29.9" r="1.2"/><circle cx="1845.7" cy="28.1" r="1.2"/><circle cx="1849.7" cy="30.2" r="1.2"/><circle cx="1851.6" cy="34.2" r="1.2"/><circle cx="1850.1" cy="38.2" r="1.2"/></g>
  </svg>
</div>

<div id="sb"></div><div id="sbthumb"></div><div id="blk"></div>
</body></html>
